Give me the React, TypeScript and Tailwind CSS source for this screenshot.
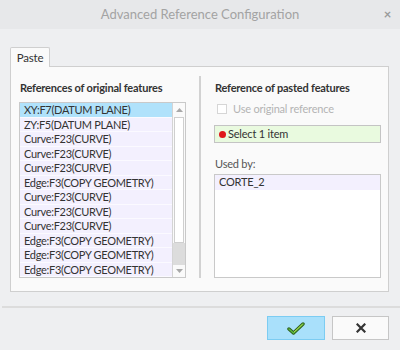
import { useState } from 'react';

const rows = [
    'XY:F7(DATUM PLANE)',
    'ZY:F5(DATUM PLANE)',
    'Curve:F23(CURVE)',
    'Curve:F23(CURVE)',
    'Curve:F23(CURVE)',
    'Edge:F3(COPY GEOMETRY)',
    'Curve:F23(CURVE)',
    'Curve:F23(CURVE)',
    'Curve:F23(CURVE)',
    'Edge:F3(COPY GEOMETRY)',
    'Edge:F3(COPY GEOMETRY)',
    'Edge:F3(COPY GEOMETRY)',
];

export default function App() {
    const [selected, setSelected] = useState(0);

    return (
        <div className="w-[400px] h-[350px] bg-[#eeeff1] flex flex-col text-[11px] tracking-[-0.2px] text-[#333] font-['Lato',sans-serif] overflow-hidden">
            {/* Title bar */}
            <div className="h-[29px] bg-[#e7e8ea] flex items-center relative shrink-0">
                <div className="flex-1 text-center text-[13px] tracking-normal text-[#a3a3a3]">Advanced Reference Configuration</div>
                <span className="absolute right-[9px] top-[8px] text-[13px] font-bold text-[#9a9a9a] leading-none">×</span>
            </div>

            {/* Tab + panel */}
            <div className="pl-[10px] pr-[11px] pt-[18px] flex flex-col">
                <div className="w-[40px] h-[20px] bg-[#fafafa] border border-b-0 border-[#cfcfcf] rounded-t-[2px] flex items-center justify-center -mb-px relative z-10 text-[11.5px]">
                    Paste
                </div>
                <div className="h-[226px] bg-[#fafafa] border border-[#cfcfcf] flex">
                    {/* Left column */}
                    <div className="pl-[9px] pt-[12px] w-[177px] flex flex-col">
                        <div className="font-bold text-[#333] leading-[18px] mb-[5px] whitespace-nowrap">References of original features</div>
                        <div className="h-[176px] w-[167px] -ml-px border border-[#c9c9c9] bg-white flex">
                            <div className="flex-1 flex flex-col">
                                {rows.map((r, i) => (
                                    <div
                                        key={i}
                                        onClick={() => setSelected(i)}
                                        className={`h-[14.5px] pl-[4px] flex items-center leading-none whitespace-nowrap tracking-[-0.3px] border-b border-[#fbfaff] ${selected === i ? 'bg-[#b0e2fb]' : 'bg-[#f3f0fe]'}`}
                                    >
                                        {r}
                                    </div>
                                ))}
                            </div>
                            {/* Scrollbar */}
                            <div className="w-[13px] border-l border-[#d4d4d4] bg-[#fafafa] flex flex-col">
                                <div className="h-[14px] flex items-center justify-center">
                                    <svg width="7" height="4" viewBox="0 0 7 4"><path d="M0 4 L3.5 0 L7 4 Z" fill="#a8a8a8" /></svg>
                                </div>
                                <div className="h-[126px] mx-[1px] bg-white border border-[#cfcfcf]" />
                                <div className="h-[22px] bg-[#dcdcdc]" />
                                <div className="flex-1 flex items-center justify-center">
                                    <svg width="7" height="4" viewBox="0 0 7 4"><path d="M0 0 L7 0 L3.5 4 Z" fill="#a8a8a8" /></svg>
                                </div>
                            </div>
                        </div>
                    </div>

                    {/* Divider */}
                    <div className="w-[2px] bg-[#d2d2d2] mt-[9px] mb-[13px] ml-[11px]" />

                    {/* Right column */}
                    <div className="pl-[14px] pt-[12px] flex flex-col w-[182px]">
                        <div className="font-bold leading-[18px] mb-[5px] whitespace-nowrap">Reference of pasted features</div>
                        <div className="flex items-center h-[14px] gap-[6px] pl-[2px]">
                            <div className="w-[10px] h-[10px] border border-[#d6d6d6] bg-white" />
                            <span className="text-[#b4b4b4]">Use original reference</span>
                        </div>
                        <div className="mt-[9px] -ml-px h-[18px] w-[167px] border border-[#c4c4c4] bg-[#e9fadf] flex items-center pl-[4px] gap-[2px]">
                            <div className="w-[7px] h-[7px] rounded-full bg-[#e0161a]" />
                            <span>Select 1 item</span>
                        </div>
                        <div className="mt-[13px] leading-[16px] text-[#555]">Used by:</div>
                        <div className="mt-[2px] -ml-px h-[104px] w-[167px] border border-[#c9c9c9] bg-white">
                            <div className="h-[15px] bg-[#f3f0fe] pl-[4px] flex items-center">CORTE_2</div>
                        </div>
                    </div>
                </div>
            </div>

            {/* Separator */}
            <div className="mt-[14px] ml-[2px] h-[2px] bg-[#dcdcdc]" />

            {/* Buttons */}
            <div className="flex justify-end gap-[7px] pr-[11px] pt-[8px]">
                <button className="w-[58px] h-[24px] bg-[#a9e0fb] border border-[#7cccf2] flex items-center justify-center">
                    <svg width="18" height="13" viewBox="0 0 18 13">
                        <path d="M2 7 L6.5 11 L16 2" fill="none" stroke="#2d5e1c" strokeWidth="3.4" strokeLinecap="round" strokeLinejoin="round" />
                        <path d="M2 7 L6.5 11 L16 2" fill="none" stroke="#5cb83e" strokeWidth="1.6" strokeLinecap="round" strokeLinejoin="round" />
                        <path d="M7 10 L15.5 2.3" fill="none" stroke="#d8e85a" strokeWidth="0.7" />
                    </svg>
                </button>
                <button className="w-[57px] h-[24px] bg-[#fafafa] border border-[#c6c6c6] flex items-center justify-center">
                    <svg width="10" height="10" viewBox="0 0 10 10">
                        <path d="M1.5 1.5 L8.5 8.5 M8.5 1.5 L1.5 8.5" stroke="#333" strokeWidth="2.2" strokeLinecap="square" />
                    </svg>
                </button>
            </div>
        </div>
    );
}
